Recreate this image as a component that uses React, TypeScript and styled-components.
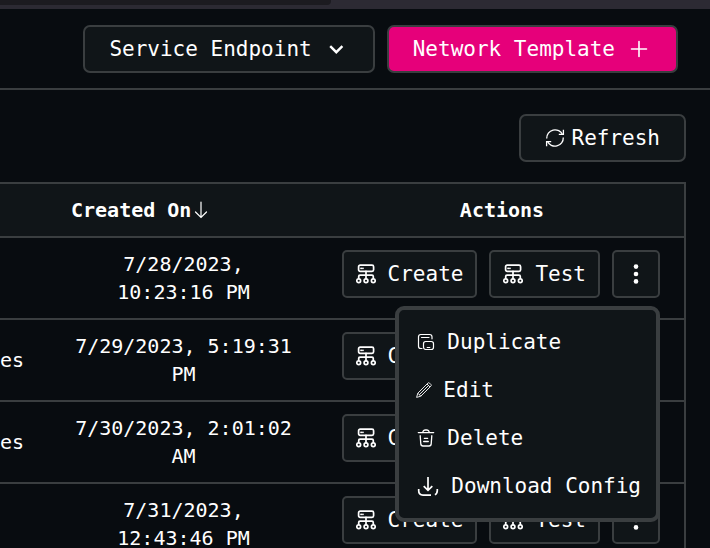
import React from "react";
import styled, { createGlobalStyle, css } from "styled-components";

const color = {
  page: "#080c10",
  panel: "#101518",
  line: "#3a3e40",
  text: "#ffffff",
  accent: "#e6007a",
};

const GlobalStyle = createGlobalStyle`
  * { box-sizing: border-box; }
  body {
    margin: 0;
    background: ${color.page};
    color: ${color.text};
    font: 20px/28px "DejaVu Sans Mono", monospace;
  }
  button { font: inherit; color: inherit; cursor: pointer; }
`;

const Page = styled.div`
  height: 100vh;
  overflow: hidden;
`;

const TopStrip = styled.div`
  height: 9px;
  background: #2c2a33;
`;

const TopStripFill = styled.div`
  width: 331px;
  max-width: 100%;
  height: 5px;
  background: #1c1b20;
  border-bottom-right-radius: 4px;
`;

const Header = styled.header`
  display: flex;
  justify-content: flex-end;
  gap: 12px;
  padding: 16px 32px 15px;
  border-bottom: 2px solid ${color.line};
`;

const buttonBase = css`
  display: inline-flex;
  align-items: center;
  height: 48px;
  border: 2px solid ${color.line};
  border-radius: 7px;
  background: ${color.panel};
  font-size: 21px;
  white-space: nowrap;
`;

const HeaderButton = styled.button<{ $primary?: boolean }>`
  ${buttonBase}
  gap: 12px;
  padding: 0 25px 0 24px;
  background: ${(p) => (p.$primary ? color.accent : color.panel)};
`;

const RefreshButton = styled.button`
  ${buttonBase}
  gap: 6px;
  padding: 0 24px;
`;

const Main = styled.main`
  padding: 24px 24px 0 0;
`;

const Toolbar = styled.div`
  display: flex;
  justify-content: flex-end;
  margin-bottom: 20px;
`;

const Table = styled.table`
  width: 100%;
  table-layout: fixed;
  border-spacing: 0;
  border-top: 2px solid ${color.line};
  border-right: 2px solid ${color.line};
`;

const NameCol = styled.col``;
const DateCol = styled.col`
  width: 273px;
`;
const ActionsCol = styled.col`
  width: 364px;
`;

const HeadCell = styled.th<{ $start?: boolean }>`
  padding: 12px 24px;
  text-align: ${(p) => (p.$start ? "left" : "center")};
  background: ${color.panel};
  border-bottom: 2px solid ${color.line};
`;

const SortLabel = styled.span`
  display: flex;
  align-items: center;
  gap: 2px;
`;

const Cell = styled.td`
  padding: 12px 24px;
  text-align: center;
  border-bottom: 2px solid ${color.line};
`;

const NameCell = styled(Cell)`
  padding: 12px 24px 12px 0;
  text-align: right;
`;

const ActionsCell = styled(Cell)`
  vertical-align: top;
`;

const Actions = styled.div`
  display: flex;
  justify-content: flex-end;
  gap: 12px;
`;

const ActionButton = styled.button`
  ${buttonBase}
  gap: 12px;
  padding: 0 12px;
  border-radius: 5px;
`;

const MoreButton = styled(ActionButton)`
  justify-content: center;
  width: 48px;
  padding: 0;
`;

const MenuAnchor = styled.div`
  position: relative;
`;

const Menu = styled.div`
  position: absolute;
  z-index: 1;
  top: calc(100% + 8px);
  right: 0;
  padding: 8px 0;
  background: ${color.panel};
  border: 4px solid ${color.line};
  border-radius: 9px;
`;

const MenuItem = styled.button`
  display: flex;
  align-items: center;
  gap: 11px;
  width: 100%;
  height: 48px;
  padding: 0 15px 0 17px;
  border: 0;
  background: none;
  font-size: 21px;
  white-space: nowrap;
`;

const Icon = styled.svg.attrs({
  fill: "none",
  stroke: "currentColor",
  "aria-hidden": true,
})`
  display: block;
  flex: none;
`;

const ChevronIcon = () => (
  <Icon width="24" height="24" viewBox="0 0 24 24" strokeWidth="2.4">
    <path d="M6.2 9.2l6.1 6 6.1-6" />
  </Icon>
);

const PlusIcon = () => (
  <Icon width="24" height="24" viewBox="0 0 24 24" strokeWidth="1.6" strokeLinecap="round">
    <path d="M12 4.5v15M4.5 12h15" />
  </Icon>
);

const RefreshIcon = () => (
  <Icon width="20" height="20" viewBox="0 0 20 20" strokeWidth="1.3">
    <path d="M1.7 10.5A8.3 8.3 0 0 1 17.6 6.8M18.3 9.5A8.3 8.3 0 0 1 2.4 13.2" />
    <path d="M18.4 1.8v4.6h-4.6M1.6 18.2v-4.6h4.6" />
  </Icon>
);

const SortIcon = () => (
  <Icon width="16" height="18" viewBox="0 0 16 18" strokeWidth="1.2" strokeLinecap="round">
    <path d="M8 1v15.5M2.5 11L8 16.5l5.5-5.5" />
  </Icon>
);

const NetworkIcon = () => (
  <Icon width="20" height="20" viewBox="0 0 20 20" strokeWidth="1.7" strokeLinecap="round">
    <rect x="2.6" y="1.2" width="15" height="6.2" rx="1.6" />
    <path d="M5 4.3h.3M6.9 4.3h.1M10 7.4v7M2.7 14.2v-1.7c0-.8.5-1.3 1.3-1.3h12c.8 0 1.3.5 1.3 1.3v1.7" />
    <circle cx="2.7" cy="16.7" r="1.9" />
    <circle cx="10" cy="16.7" r="1.9" />
    <circle cx="17.3" cy="16.7" r="1.9" />
  </Icon>
);

const MoreIcon = () => (
  <Icon width="20" height="20" viewBox="0 0 20 20">
    <g fill="currentColor" stroke="none">
      <circle cx="10" cy="2.6" r="2.3" />
      <circle cx="10" cy="10" r="2.3" />
      <circle cx="10" cy="17.4" r="2.3" />
    </g>
  </Icon>
);

const DuplicateIcon = () => (
  <Icon width="20" height="20" viewBox="0 0 20 20" strokeWidth="1.2" strokeLinecap="round">
    <path d="M6 16.5H4.8a2.3 2.3 0 0 1-2.3-2.3V4.8a2.3 2.3 0 0 1 2.3-2.3h8.9A2.3 2.3 0 0 1 16 4.8v2M5.5 5.5h7.5" />
    <rect x="7.5" y="9.5" width="10" height="8" rx="2.2" />
    <path d="M11.2 15.5h2.6" />
  </Icon>
);

const EditIcon = () => (
  <Icon width="16" height="16" viewBox="0 0 16 16" strokeWidth="0.9" strokeLinejoin="round">
    <path d="M.6 15.4l1.2-4.2L11.9 1.1c.5-.5 1.1-.5 1.6 0l1.4 1.4c.5.5.5 1.1 0 1.6L4.8 14.2zM1.8 11.2l3 3M11 2l3 3M3.3 12.7l9.2-9.2" />
  </Icon>
);

const DeleteIcon = () => (
  <Icon width="20" height="20" viewBox="0 0 20 20" strokeWidth="1.3" strokeLinecap="round">
    <path d="M2.3 4.6h15.4M6.6 4.4C7 2.8 7.9 2 9 2h2c1.1 0 2 .8 2.4 2.4" />
    <path d="M4.2 7.7l.6 8.2c.1 1.4.9 2.1 2.2 2.1h6c1.3 0 2.1-.7 2.2-2.1l.6-8.2M8.4 10.4h3.2M7.7 13.5h4.6" />
  </Icon>
);

const DownloadIcon = () => (
  <Icon width="24" height="24" viewBox="0 0 24 24" strokeWidth="1.7">
    <path d="M12 3v13.5M7.7 12.1L12 16.4l4.3-4.3M2.7 15v1.8c0 3 1.3 4.3 4.3 4.3h8M21.3 15v1.5c0 2-.7 3.4-2.4 4.2" />
  </Icon>
);

const rows = [
  { name: "", created: "7/28/2023, 10:23:16 PM" },
  { name: "es", created: "7/29/2023, 5:19:31 PM" },
  { name: "es", created: "7/30/2023, 2:01:02 AM" },
  { name: "", created: "7/31/2023, 12:43:46 PM" },
];

const menuItems = [
  { label: "Duplicate", Glyph: DuplicateIcon },
  { label: "Edit", Glyph: EditIcon },
  { label: "Delete", Glyph: DeleteIcon },
  { label: "Download Config", Glyph: DownloadIcon },
];

export default function App() {
  return (
    <>
      <GlobalStyle />
      <Page>
        <TopStrip>
          <TopStripFill />
        </TopStrip>
        <Header>
          <HeaderButton type="button" aria-haspopup="listbox">
            Service Endpoint
            <ChevronIcon />
          </HeaderButton>
          <HeaderButton type="button" $primary>
            Network Template
            <PlusIcon />
          </HeaderButton>
        </Header>
        <Main>
          <Toolbar>
            <RefreshButton type="button">
              <RefreshIcon />
              Refresh
            </RefreshButton>
          </Toolbar>
          <Table>
            <colgroup>
              <NameCol />
              <DateCol />
              <ActionsCol />
            </colgroup>
            <thead>
              <tr>
                <HeadCell scope="col" />
                <HeadCell scope="col" $start aria-sort="descending">
                  <SortLabel>
                    Created On
                    <SortIcon />
                  </SortLabel>
                </HeadCell>
                <HeadCell scope="col">Actions</HeadCell>
              </tr>
            </thead>
            <tbody>
              {rows.map((row, index) => (
                <tr key={row.created}>
                  <NameCell>{row.name}</NameCell>
                  <Cell>{row.created}</Cell>
                  <ActionsCell>
                    <Actions>
                      <ActionButton type="button">
                        <NetworkIcon />
                        Create
                      </ActionButton>
                      <ActionButton type="button">
                        <NetworkIcon />
                        Test
                      </ActionButton>
                      <MenuAnchor>
                        <MoreButton type="button" aria-label="More actions" aria-expanded={index === 0}>
                          <MoreIcon />
                        </MoreButton>
                        {index === 0 && (
                          <Menu role="menu">
                            {menuItems.map(({ label, Glyph }) => (
                              <MenuItem key={label} type="button" role="menuitem">
                                <Glyph />
                                {label}
                              </MenuItem>
                            ))}
                          </Menu>
                        )}
                      </MenuAnchor>
                    </Actions>
                  </ActionsCell>
                </tr>
              ))}
            </tbody>
          </Table>
        </Main>
      </Page>
    </>
  );
}
